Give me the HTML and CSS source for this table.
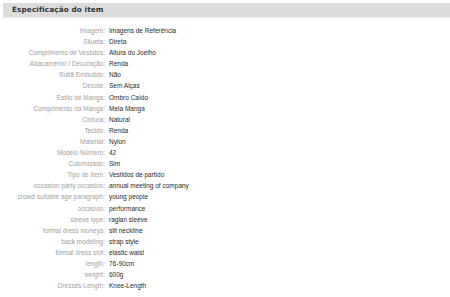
FILE: index.html
```html
<!DOCTYPE html>
<html>
<head>
<meta charset="utf-8">
<link rel="stylesheet" href="styles.css">
</head>
<body>
<div class="spec">
  <div class="spec-head">Especificação do item</div>
  <div class="spec-list">
    <div class="row"><span class="k">Imagem:</span><span class="v">Imagens de Referência</span></div>
    <div class="row"><span class="k">Silueta:</span><span class="v">Direta</span></div>
    <div class="row"><span class="k">Comprimento de Vestidos:</span><span class="v">Altura do Joelho</span></div>
    <div class="row"><span class="k">Abacamento / Decoração:</span><span class="v">Renda</span></div>
    <div class="row"><span class="k">Sutiã Embutido:</span><span class="v">Não</span></div>
    <div class="row"><span class="k">Decote:</span><span class="v">Sem Alças</span></div>
    <div class="row"><span class="k">Estilo de Manga:</span><span class="v">Ombro Caído</span></div>
    <div class="row"><span class="k">Comprimento da Manga:</span><span class="v">Meia Manga</span></div>
    <div class="row"><span class="k">Cintura:</span><span class="v">Natural</span></div>
    <div class="row"><span class="k">Tecido:</span><span class="v">Renda</span></div>
    <div class="row"><span class="k">Material:</span><span class="v">Nylon</span></div>
    <div class="row"><span class="k">Modelo Número:</span><span class="v">42</span></div>
    <div class="row"><span class="k">Cutomizado:</span><span class="v">Sim</span></div>
    <div class="row"><span class="k">Tipo de Item:</span><span class="v">Vestidos de partido</span></div>
    <div class="row"><span class="k">occasion party occasion:</span><span class="v">annual meeting of company</span></div>
    <div class="row"><span class="k">crowd suitable age paragraph:</span><span class="v">young people</span></div>
    <div class="row"><span class="k">occasion:</span><span class="v">performance</span></div>
    <div class="row"><span class="k">sleeve type:</span><span class="v">raglan sleeve</span></div>
    <div class="row"><span class="k">formal dress moneys:</span><span class="v">slit neckline</span></div>
    <div class="row"><span class="k">back modeling:</span><span class="v">strap style</span></div>
    <div class="row"><span class="k">formal dress slot:</span><span class="v">elastic waist</span></div>
    <div class="row"><span class="k">length:</span><span class="v">76-90cm</span></div>
    <div class="row"><span class="k">weight:</span><span class="v">600g</span></div>
    <div class="row"><span class="k">Dresses Length:</span><span class="v">Knee-Length</span></div>
  </div>
</div>
</body>
</html>
```
FILE: styles.css
```css
html, body {
  margin: 0;
  padding: 0;
  background: #ffffff;
}
body {
  font-family: "Liberation Sans", Arial, sans-serif;
  width: 450px;
  height: 297px;
  overflow: hidden;
}
.spec {
  padding: 3px 0 0 3px;
}
.spec-head {
  height: 14px;
  line-height: 14px;
  background: #dcdcdc;
  border-bottom: 1px solid #ececec;
  padding-left: 9px;
  font-family: "DejaVu Sans", Verdana, sans-serif;
  font-size: 7.3px;
  font-weight: bold;
  letter-spacing: 0.1px;
  color: #333333;
}
.spec-list {
  padding-top: 7px;
  font-size: 6.5px;
}
.row {
  display: grid;
  grid-template-columns: 102px 1fr;
  column-gap: 4px;
  height: 11.1px;
  line-height: 11.1px;
  white-space: nowrap;
}
.k {
  text-align: right;
  color: #a0a0a0;
}
.v {
  color: #2a2a2a;
}
```
